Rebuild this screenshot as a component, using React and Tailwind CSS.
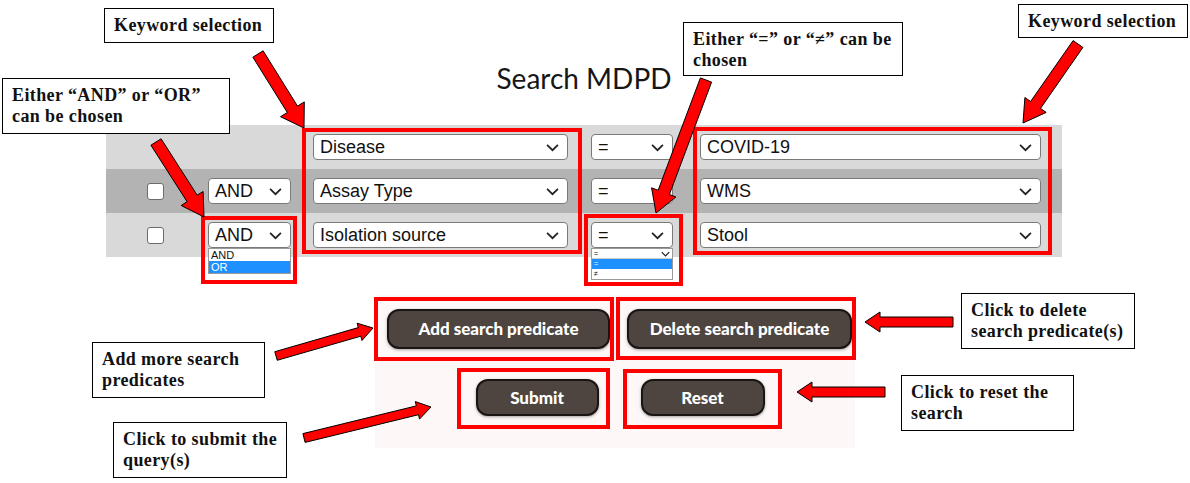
import React from "react";

/* ---------- helpers ---------- */

const arrowPoints = (x1, y1, x2, y2, sw, hw, hl) => {
  const dx = x2 - x1;
  const dy = y2 - y1;
  const len = Math.hypot(dx, dy);
  const ux = dx / len;
  const uy = dy / len;
  const nx = -uy;
  const ny = ux;
  const bx = x2 - ux * hl;
  const by = y2 - uy * hl;
  const p = [
    [x1 + (nx * sw) / 2, y1 + (ny * sw) / 2],
    [bx + (nx * sw) / 2, by + (ny * sw) / 2],
    [bx + (nx * hw) / 2, by + (ny * hw) / 2],
    [x2, y2],
    [bx - (nx * hw) / 2, by - (ny * hw) / 2],
    [bx - (nx * sw) / 2, by - (ny * sw) / 2],
    [x1 - (nx * sw) / 2, y1 - (ny * sw) / 2],
  ];
  return p.map(([a, b]) => `${a.toFixed(1)},${b.toFixed(1)}`).join(" ");
};

const ARROWS = [
  [258, 54, 304, 128, 12, 28, 22],
  [156, 142, 204, 217, 12, 26, 22],
  [706, 80, 656, 213, 12, 26, 22],
  [1078, 44, 1023, 123, 12, 26, 22],
  [276, 356, 373, 328, 9, 18, 14],
  [304, 438, 431, 407, 9, 18, 14],
  [953, 322, 865, 322, 10, 20, 15],
  [885, 392, 797, 392, 10, 20, 15],
];

const Chevron = ({ className = "" }) => (
  <svg viewBox="0 0 12 8" className={className} fill="none">
    <polyline points="1,1.5 6,6.5 11,1.5" stroke="#222" strokeWidth="1.6" />
  </svg>
);

const Select = ({ value, width }) => (
  <div
    className={`h-[26px] ${width} flex items-center justify-between bg-white border border-[#7a7a7a] rounded-[4px] pl-[6px] pr-[8px] text-[18px] text-[#111] leading-none`}
  >
    <span>{value}</span>
    <Chevron className="w-[13px] h-[9px]" />
  </div>
);

const Checkbox = () => (
  <div className="w-[17px] h-[17px] bg-white border border-[#6b6b6b] rounded-[3px]" />
);

const Callout = ({ className, children }) => (
  <div
    className={`absolute bg-white border border-black px-[9px] pt-[6px] font-bold text-[18px] tracking-[0.4px] leading-[21px] text-[#111] whitespace-nowrap ${className}`}
    style={{ fontFamily: '"Liberation Serif", serif' }}
  >
    {children}
  </div>
);

const RedBox = ({ className }) => (
  <div className={`absolute border-[4px] border-[#ff0000] ${className}`} />
);

const Btn = ({ children, className }) => (
  <button
    className={`bg-[#4e4540] border-2 border-[#1a1512] rounded-[12px] text-white font-black text-[17px] shadow-[0_1px_3px_rgba(0,0,0,0.35)] ${className}`}
    style={{ fontFamily: 'Lato, "Open Sans", sans-serif' }}
  >
    {children}
  </button>
);

/* ---------- rows ---------- */

const Row = ({ bg, first, field, op, value, children }) => (
  <div className={`h-[44px] flex items-center pl-[41px] ${bg}`}>
    <div className="w-[17px]">{!first && <Checkbox />}</div>
    <div className="ml-[44px] w-[83px] relative">
      {!first && <Select value="AND" width="w-[83px]" />}
      {children?.[0]}
    </div>
    <div className="ml-[22px]">
      <Select value={field} width="w-[255px]" />
    </div>
    <div className="ml-[23px] relative">
      <Select value={op} width="w-[82px]" />
      {children?.[1]}
    </div>
    <div className="ml-[27px]">
      <Select value={value} width="w-[341px]" />
    </div>
  </div>
);

/* ---------- main ---------- */

export default function App() {
  return (
    <div
      className="relative w-[1190px] h-[483px] bg-white overflow-hidden"
      style={{ fontFamily: '"Liberation Sans", Arial, sans-serif' }}
    >
      <div className="ml-[106px] w-[956px] pt-[60px]">
        <h1
          className="text-center text-[28px] leading-[36px] text-[#161616] h-[65px]"
          style={{ fontFamily: 'Lato, "Noto Sans", sans-serif' }}
        >
          Search MDPD
        </h1>

        <div className="flex flex-col">
          <Row bg="bg-[#d9d9d9]" first field="Disease" op="=" value="COVID-19" />
          <Row bg="bg-[#b3b3b3]" field="Assay Type" op="=" value="WMS" />
          <Row bg="bg-[#d9d9d9]" field="Isolation source" op="=" value="Stool">
            {[
              <div
                key="and"
                className="absolute left-0 top-[26px] w-[83px] bg-white border border-[#9a9a9a] text-[11px] leading-[12px]"
              >
                <div className="pl-[2px] text-[#111]">AND</div>
                <div className="pl-[2px] bg-[#1e90ff] text-white">OR</div>
              </div>,
              <div
                key="op"
                className="absolute left-0 top-[26px] w-[82px] bg-white border border-[#9a9a9a] text-[7px] leading-[10px]"
              >
                <div className="flex items-center justify-between px-[2px] h-[10px] border-b border-[#ccc]">
                  <span>=</span>
                  <Chevron className="w-[9px] h-[6px]" />
                </div>
                <div className="px-[2px] h-[10px] bg-[#1e90ff] text-white">=</div>
                <div className="px-[2px] h-[10px]">≠</div>
              </div>,
            ]}
          </Row>
        </div>
      </div>

      {/* Buttons */}
      <div className="ml-[375px] mt-[38px] w-[480px] h-[153px] bg-[#fdf7f7] flex flex-col items-center pt-[14px]">
        <div className="flex gap-[17px] pl-[12px] w-full">
          <Btn className="w-[223px] h-[40px]">Add search predicate</Btn>
          <Btn className="w-[225px] h-[40px]">Delete search predicate</Btn>
        </div>
        <div className="flex gap-[42px] mt-[30px] pl-[10px]">
          <Btn className="w-[123px] h-[37px]">Submit</Btn>
          <Btn className="w-[124px] h-[37px]">Reset</Btn>
        </div>
      </div>

      {/* Annotation overlay */}
      <RedBox className="left-[302px] top-[128px] w-[280px] h-[126px]" />
      <RedBox className="left-[693px] top-[127px] w-[359px] h-[128px]" />
      <RedBox className="left-[201px] top-[216px] w-[96px] h-[68px]" />
      <RedBox className="left-[584px] top-[214px] w-[99px] h-[72px]" />
      <RedBox className="left-[374px] top-[297px] w-[240px] h-[64px]" />
      <RedBox className="left-[616px] top-[297px] w-[240px] h-[63px]" />
      <RedBox className="left-[457px] top-[368px] w-[153px] h-[61px]" />
      <RedBox className="left-[623px] top-[369px] w-[159px] h-[60px]" />

      <svg className="absolute inset-0 pointer-events-none" width="1190" height="483">
        {ARROWS.map((a, i) => (
          <polygon
            key={i}
            points={arrowPoints(...a)}
            fill="#ff0000"
            stroke="#000"
            strokeWidth="1"
            strokeLinejoin="miter"
          />
        ))}
      </svg>

      <Callout className="left-[104px] top-[8px] w-[170px] h-[35px]">Keyword selection</Callout>
      <Callout className="left-[2px] top-[78px] w-[228px] h-[56px]">
        Either “AND” or “OR”
        <br />
        can be chosen
      </Callout>
      <Callout className="left-[683px] top-[22px] w-[220px] h-[54px]">
        Either “=” or “≠” can be
        <br />
        chosen
      </Callout>
      <Callout className="left-[1018px] top-[4px] w-[170px] h-[34px]">Keyword selection</Callout>
      <Callout className="left-[92px] top-[342px] w-[173px] h-[56px]">
        Add more search
        <br />
        predicates
      </Callout>
      <Callout className="left-[113px] top-[422px] w-[174px] h-[56px]">
        Click to submit the
        <br />
        query(s)
      </Callout>
      <Callout className="left-[961px] top-[293px] w-[174px] h-[56px]">
        Click to delete
        <br />
        search predicate(s)
      </Callout>
      <Callout className="left-[901px] top-[375px] w-[173px] h-[56px]">
        Click to reset the
        <br />
        search
      </Callout>
    </div>
  );
}
